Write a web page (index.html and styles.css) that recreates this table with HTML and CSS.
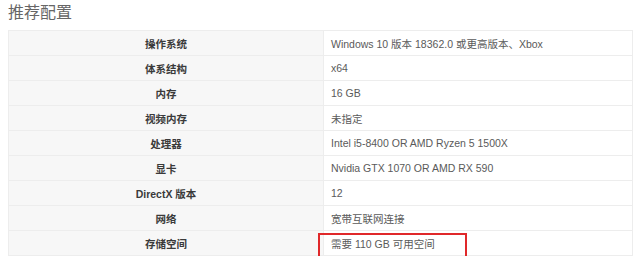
FILE: index.html
```html
<!DOCTYPE html>
<html lang="zh">
<head>
<meta charset="utf-8">
<link rel="stylesheet" href="styles.css">
</head>
<body>
<h2 class="title">推荐配置</h2>
<table class="spec">
  <tr><th>操作系统</th><td>Windows 10 版本 18362.0 或更高版本、Xbox</td></tr>
  <tr><th>体系结构</th><td>x64</td></tr>
  <tr><th>内存</th><td>16 GB</td></tr>
  <tr><th>视频内存</th><td>未指定</td></tr>
  <tr><th>处理器</th><td>Intel i5-8400 OR AMD Ryzen 5 1500X</td></tr>
  <tr><th>显卡</th><td>Nvidia GTX 1070 OR AMD RX 590</td></tr>
  <tr><th>DirectX 版本</th><td>12</td></tr>
  <tr><th>网络</th><td>宽带互联网连接</td></tr>
  <tr><th>存储空间</th><td class="hl">需要 110 GB 可用空间<span class="mark"></span></td></tr>
</table>
</body>
</html>
```
FILE: styles.css
```css
html, body { margin: 0; padding: 0; background: #fff; }
body {
  padding: 0 4px 0 8px;
  font-family: "Liberation Sans", "Noto Sans CJK SC", sans-serif;
  overflow: hidden;
}
.title {
  margin: 0;
  padding-top: 2px;
  height: 28px;
  font-size: 16px;
  font-weight: normal;
  color: #666;
  font-family: "Noto Sans CJK SC", sans-serif;
  line-height: 19px;
}
.spec {
  width: 625px;
  border-collapse: collapse;
  font-size: 10.5px;
  color: #5a5a5a;
}
.spec th, .spec td {
  border: 1px solid #ededed;
  height: 24px;
  padding: 0;
}
.spec th {
  width: 314px;
  background: #f7f7f7;
  font-weight: bold;
  color: #3a3a3a;
  text-align: center;
}
.spec td {
  padding-left: 7px;
  text-align: left;
}
.hl { position: relative; }
.mark {
  position: absolute;
  left: -6px;
  top: 2px;
  width: 145px;
  height: 26px;
  border: 2px solid #e0282a;
}
```
